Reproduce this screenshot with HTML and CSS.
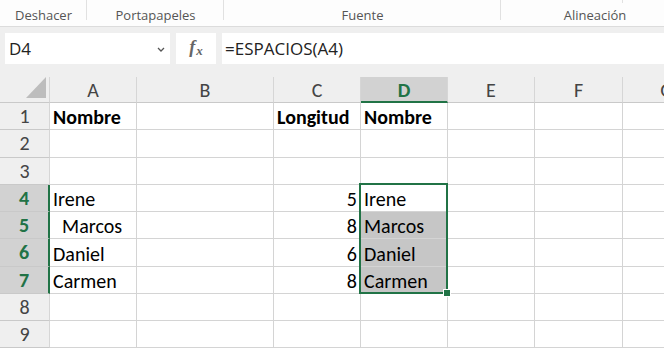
FILE: index.html
```html
<!DOCTYPE html>
<html lang="es">
<head>
<meta charset="utf-8">
<title>Excel ESPACIOS</title>
<link rel="stylesheet" href="styles.css">
</head>
<body>
<div class="ribbon">
  <div class="group g1">Deshacer</div>
  <div class="group g2">Portapapeles</div>
  <div class="group g3">Fuente</div>
  <div class="group g4">Alineación</div>
</div>
<div class="fbar">
  <div class="namebox">
    <span>D4</span>
    <svg class="chev" width="8" height="5" viewBox="0 0 8 5"><polyline points="1,1 4,4 7,1" fill="none" stroke="#555" stroke-width="1.3"/></svg>
  </div>
  <div class="fxbtn"><span class="fx">f<span class="sub">x</span></span></div>
  <div class="formula">=ESPACIOS(A4)</div>
</div>
<div class="sheet">
  <div class="hd corner"><svg width="20" height="21" viewBox="0 0 20 21"><polygon points="20,0 20,21 0,21" fill="#bdbdbd"/></svg></div>
  <div class="hd col">A</div>
  <div class="hd col">B</div>
  <div class="hd col">C</div>
  <div class="hd col sel">D</div>
  <div class="hd col">E</div>
  <div class="hd col">F</div>
  <div class="hd col">G</div>

  <div class="hd row">1</div>
  <div class="c b">Nombre</div><div class="c"></div><div class="c b">Longitud</div><div class="c b">Nombre</div><div class="c"></div><div class="c"></div><div class="c"></div>

  <div class="hd row">2</div>
  <div class="c"></div><div class="c"></div><div class="c"></div><div class="c"></div><div class="c"></div><div class="c"></div><div class="c"></div>

  <div class="hd row">3</div>
  <div class="c"></div><div class="c"></div><div class="c"></div><div class="c"></div><div class="c"></div><div class="c"></div><div class="c"></div>

  <div class="hd row sel">4</div>
  <div class="c">Irene</div><div class="c"></div><div class="c num">5</div><div class="c">Irene</div><div class="c"></div><div class="c"></div><div class="c"></div>

  <div class="hd row sel">5</div>
  <div class="c">&nbsp;&nbsp;Marcos</div><div class="c"></div><div class="c num">8</div><div class="c hl">Marcos</div><div class="c"></div><div class="c"></div><div class="c"></div>

  <div class="hd row sel">6</div>
  <div class="c">Daniel</div><div class="c"></div><div class="c num">6</div><div class="c hl">Daniel</div><div class="c"></div><div class="c"></div><div class="c"></div>

  <div class="hd row sel">7</div>
  <div class="c">Carmen</div><div class="c"></div><div class="c num">8</div><div class="c hl">Carmen</div><div class="c"></div><div class="c"></div><div class="c"></div>

  <div class="hd row">8</div>
  <div class="c"></div><div class="c"></div><div class="c"></div><div class="c"></div><div class="c"></div><div class="c"></div><div class="c"></div>

  <div class="hd row">9</div>
  <div class="c"></div><div class="c"></div><div class="c"></div><div class="c"></div><div class="c"></div><div class="c"></div><div class="c"></div>

  <div class="selection"><div class="handle"></div></div>
</div>
</body>
</html>
```

FILE: styles.css
```css
html, body {
  margin: 0;
  padding: 0;
  background: #ffffff;
  overflow: hidden;
}
body {
  width: 664px;
  height: 348px;
  font-family: "Open Sans", "Noto Sans", sans-serif;
}

.ribbon {
  display: flex;
  height: 27px;
  background: #fdfdfd;
  border-bottom: 1px solid #dcdcdc;
  box-sizing: border-box;
}
.group {
  flex: none;
  text-align: center;
  font-size: 13px;
  color: #555555;
  line-height: 22px;
  padding-top: 4px;
  box-sizing: border-box;
  background: linear-gradient(#e1e1e1, #e1e1e1) right top / 1px 20px no-repeat;
}
.g1 { width: 87px; }
.g2 { width: 137px; }
.g3 { width: 277px; }
.g4 { width: 188px; background: linear-gradient(#e1e1e1, #e1e1e1) 121px top / 1px 3px no-repeat; }

.fbar {
  display: flex;
  gap: 6px;
  background: #efefef;
  padding: 6px 0 13px 5px;
  height: 31px;
}
.namebox {
  width: 165px;
  background: #ffffff;
  display: flex;
  align-items: center;
  justify-content: space-between;
  padding: 0 5px 0 4px;
  box-sizing: border-box;
  font-size: 17px;
  color: #222;
}
.chev { margin-top: 2px; }
.fxbtn {
  width: 40px;
  background: #ffffff;
  display: flex;
  align-items: center;
  justify-content: center;
}
.fx {
  font-family: "Liberation Serif", "DejaVu Serif", serif;
  font-style: italic;
  font-weight: bold;
  font-size: 18px;
  color: #666666;
  margin-top: -2px;
}
.fx .sub {
  font-size: 13px;
  position: relative;
  top: 2px;
  margin-left: 1px;
}
.formula {
  flex: 1;
  background: #ffffff;
  font-size: 17px;
  line-height: 31px;
  padding-left: 3px;
  color: #222;
}

.sheet {
  position: relative;
  display: grid;
  grid-template-columns: 50px 87px 137px 87px 87px 87px 88px 88px;
  grid-template-rows: 26px repeat(9, 27.25px);
  font-family: Carlito, Calibri, Lato, sans-serif;
  font-size: 20px;
  color: #000;
}
.hd {
  background: #efefef;
  color: #444444;
  border-right: 1px solid #d6d6d6;
  border-bottom: 1px solid #c9c9c9;
  box-sizing: border-box;
  display: flex;
  align-items: center;
  justify-content: center;
}
.hd.col { line-height: 20px; padding-top: 1px; }
.hd.sel {
  background: #d2d2d2;
  color: #217346;
  font-weight: bold;
}
.hd.col.sel { border-bottom: 2px solid #217346; }
.hd.row.sel { border-right: 2px solid #217346; }
.corner {
  justify-content: flex-end;
  align-items: flex-end;
  padding: 0 3px 4px 0;
}
.corner svg { display: block; }

.c {
  border-right: 1px solid #d4d4d4;
  border-bottom: 1px solid #d4d4d4;
  box-sizing: border-box;
  display: flex;
  align-items: flex-end;
  padding: 0 3px 2px 3px;
  line-height: 20px;
  white-space: pre;
  overflow: hidden;
}
.c.b { font-weight: bold; }
.c.num { justify-content: flex-end; }
.c.hl { background: #c6c6c6; }

.selection {
  position: absolute;
  left: 359px;
  top: 106px;
  width: 89px;
  height: 111px;
  border: 2px solid #217346;
  box-sizing: border-box;
  pointer-events: none;
}
.handle {
  position: absolute;
  right: -5px;
  bottom: -5px;
  width: 6px;
  height: 6px;
  background: #217346;
  border: 1px solid #ffffff;
}
```
